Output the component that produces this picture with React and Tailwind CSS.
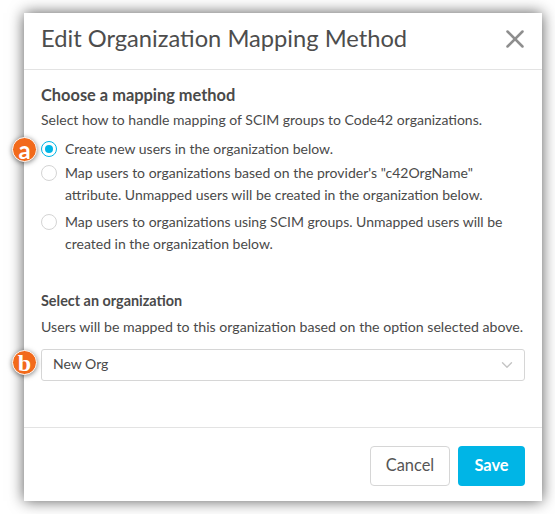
import React from "react";
import { X, ChevronDown } from "lucide-react";

const options = [
  { id: "new", label: "Create new users in the organization below.", checked: true, gap: "mb-[2px]" },
  {
    id: "attr",
    label:
      'Map users to organizations based on the provider\'s "c42OrgName" attribute. Unmapped users will be created in the organization below.',
    gap: "mb-[5px]",
  },
  {
    id: "scim",
    label:
      "Map users to organizations using SCIM groups. Unmapped users will be created in the organization below.",
    gap: "",
  },
];

const Badge = ({ letter, className }) => (
  <span
    className={`absolute flex h-[25px] w-[25px] items-center justify-center rounded-full border-[1.5px] border-white bg-[#f26a1b] text-[24px] leading-none font-bold text-white shadow-[0_1px_5px_rgba(0,0,0,0.5)] ${className}`}
  >
    {letter}
  </span>
);

const App = () => {
  return (
    <div className="h-[514px] w-[555px] bg-white pt-[13px] pl-[24px] font-['Lato',sans-serif] text-[#4a4a4a]">
      <div className="relative flex h-[488px] w-[518px] flex-col bg-white shadow-[0_0_14px_rgba(0,0,0,0.65)]">
        {/* Header */}
        <div className="flex h-[57px] items-center justify-between border-b border-[#e3e3e3] pr-[12px] pb-[4px] pl-[17px]">
          <h1 className="text-[23.7px] leading-none text-[#4d4d4d]">Edit Organization Mapping Method</h1>
          <X size={30} strokeWidth={2} className="text-[#8e8e8e]" />
        </div>

        {/* Body */}
        <div className="flex-1 px-[17px] pt-[15px]">
          <h2 className="text-[16.4px] leading-[20px] font-bold">Choose a mapping method</h2>
          <p className="mt-[5px] text-[14px] leading-[20px]">
            Select how to handle mapping of SCIM groups to Code42 organizations.
          </p>
          <ul className="mt-[8px]">
            {options.map((opt) => (
              <li key={opt.id} className={`flex gap-[8px] text-[14px] leading-[22px] ${opt.gap}`}>
                <span
                  className={`mt-[3px] flex h-[16px] w-[16px] shrink-0 items-center justify-center rounded-full border bg-white ${
                    opt.checked ? "border-[#00b5e6]" : "border-[#d4d4d4]"
                  }`}
                >
                  {opt.checked && <span className="h-[8px] w-[8px] rounded-full bg-[#00b5e6]" />}
                </span>
                <span>{opt.label}</span>
              </li>
            ))}
          </ul>

          <h2 className="mt-[36px] text-[14.4px] leading-[20px] font-bold">Select an organization</h2>
          <p className="mt-[6px] text-[14.15px] leading-[20px]">
            Users will be mapped to this organization based on the option selected above.
          </p>
          <div className="mt-[12px] flex h-[32px] items-center justify-between rounded-[3px] border border-[#d6d6d6] pr-[8px] pl-[11px] text-[14px]">
            <span className="-translate-y-[2px]">New Org</span>
            <ChevronDown size={18} strokeWidth={1.8} className="text-[#c4c4c4]" />
          </div>
        </div>

        {/* Footer */}
        <div className="flex h-[74px] items-center justify-end gap-[8px] border-t border-[#e3e3e3] pt-[2px] pr-[17px]">
          <button className="h-[40px] w-[80px] rounded-[4px] border border-[#d6d6d6] bg-white text-[16.4px] text-[#555]">
            Cancel
          </button>
          <button className="h-[40px] w-[67px] rounded-[4px] bg-[#00b5e6] text-[16.4px] font-bold text-white">
            Save
          </button>
        </div>

        <Badge letter="a" className="top-[124px] left-[-12px]" />
        <Badge letter="b" className="top-[337px] left-[-12px] font-['Liberation_Serif',serif]" />
      </div>
    </div>
  );
};

export default App;
